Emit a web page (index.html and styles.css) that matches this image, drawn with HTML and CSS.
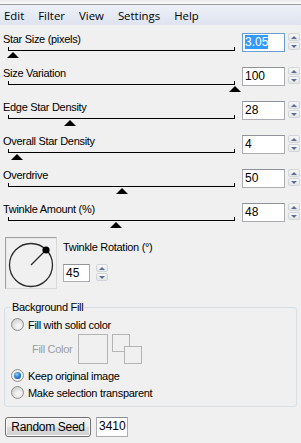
FILE: index.html
```html
<!DOCTYPE html>
<html lang="en">
<head>
    <meta charset="UTF-8">
    <title>Star Field</title>
    <link rel="stylesheet" href="styles.css">
</head>
<body>
    <div class="topstrip"></div>
    <div class="menubar">
        <span>Edit</span>
        <span>Filter</span>
        <span>View</span>
        <span>Settings</span>
        <span>Help</span>
    </div>

    <div class="panel">
        <div class="row">
            <div class="control">
                <div class="label">Star Size (pixels)</div>
                <div class="slider"><div class="track"></div><div class="thumb" style="left:2.4%"></div></div>
            </div>
            <div class="field focused"><span class="sel">3.05</span></div>
            <div class="spin"><div class="up"></div><div class="down"></div></div>
        </div>
        <div class="row">
            <div class="control">
                <div class="label">Size Variation</div>
                <div class="slider"><div class="track"></div><div class="thumb" style="left:100%"></div></div>
            </div>
            <div class="field">100</div>
            <div class="spin"><div class="up"></div><div class="down"></div></div>
        </div>
        <div class="row">
            <div class="control">
                <div class="label">Edge Star Density</div>
                <div class="slider"><div class="track"></div><div class="thumb" style="left:27.3%"></div></div>
            </div>
            <div class="field">28</div>
            <div class="spin"><div class="up"></div><div class="down"></div></div>
        </div>
        <div class="row">
            <div class="control">
                <div class="label">Overall Star Density</div>
                <div class="slider"><div class="track"></div><div class="thumb" style="left:4%"></div></div>
            </div>
            <div class="field">4</div>
            <div class="spin"><div class="up"></div><div class="down"></div></div>
        </div>
        <div class="row">
            <div class="control">
                <div class="label">Overdrive</div>
                <div class="slider"><div class="track"></div><div class="thumb" style="left:50.2%"></div></div>
            </div>
            <div class="field">50</div>
            <div class="spin"><div class="up"></div><div class="down"></div></div>
        </div>
        <div class="row">
            <div class="control">
                <div class="label">Twinkle Amount (%)</div>
                <div class="slider"><div class="track"></div><div class="thumb" style="left:47.6%"></div></div>
            </div>
            <div class="field">48</div>
            <div class="spin"><div class="up"></div><div class="down"></div></div>
        </div>

        <div class="rotation">
            <div class="dial">
                <svg width="50" height="50" viewBox="0 0 50 50">
                    <circle cx="25" cy="27" r="21.5" fill="none" stroke="#2b2b2b" stroke-width="1.3"/>
                    <line x1="25" y1="27" x2="40" y2="12" stroke="#2b2b2b" stroke-width="1.3"/>
                    <circle cx="40" cy="12" r="3.6" fill="#000"/>
                </svg>
            </div>
            <div class="rot-side">
                <div class="label">Twinkle Rotation (°)</div>
                <div class="rot-input">
                    <div class="field small">45</div>
                    <div class="spin"><div class="up"></div><div class="down"></div></div>
                </div>
            </div>
        </div>

        <fieldset class="group">
            <legend>Background Fill</legend>
            <div class="radio-row"><span class="radio"></span>Fill with solid color</div>
            <div class="fill-row">
                <span class="disabled">Fill Color</span>
                <span class="swatch"></span>
                <span class="swap"><span class="sq first"></span><span class="sq second"></span></span>
            </div>
            <div class="radio-row"><span class="radio checked"></span>Keep original image</div>
            <div class="radio-row"><span class="radio"></span>Make selection transparent</div>
        </fieldset>

        <div class="seed-row">
            <button class="btn">Random Seed</button>
            <div class="field seed">3410</div>
        </div>
    </div>
</body>
</html>
```

FILE: styles.css
```css
body {
    margin: 0;
    background: #f0f0f0;
    font-family: "Liberation Sans", Arial, sans-serif;
    font-size: 11px;
    color: #000;
    width: 301px;
    height: 443px;
    overflow: hidden;
}
.topstrip {
    height: 4px;
    background: linear-gradient(#e9e9e9, #fbfbfb);
    border-bottom: 1px solid #9c9c9c;
}
.menubar {
    height: 20px;
    display: flex;
    align-items: center;
    gap: 14px;
    padding-left: 4px;
    background: linear-gradient(#eef1f9, #dde3ef);
    font-family: "Open Sans", sans-serif;
    font-size: 11.4px;
    color: #000;
}
.panel {
    padding: 8px 1px 0 3px;
}
.label {
    line-height: 13px;
    height: 13px;
    letter-spacing: -0.3px;
    white-space: nowrap;
}
.row {
    display: grid;
    grid-template-columns: 1fr 43px 12px;
    column-gap: 3px;
    height: 34px;
}
.slider {
    position: relative;
    width: 227px;
    height: 10px;
    margin: 1px 0 0 5px;
}
.track {
    position: absolute;
    left: 0;
    right: 0;
    top: 0;
    height: 3px;
    border: 1px solid #000;
    border-top: none;
}
.thumb {
    position: absolute;
    top: 5px;
    width: 0;
    height: 0;
    margin-left: -6px;
    border-left: 6px solid transparent;
    border-right: 6px solid transparent;
    border-bottom: 6px solid #000;
}
.field {
    box-sizing: border-box;
    height: 19px;
    background: #fff;
    border: 1px solid #abadb3;
    border-top-color: #8e939b;
    padding: 1px 2px;
    line-height: 15px;
    font-size: 12px;
}
.field.focused {
    border-color: #6a9fd4;
}
.sel {
    background: #3399ff;
    color: #fff;
}
.spin {
    display: flex;
    flex-direction: column;
    gap: 1px;
    height: 17px;
}
.spin div {
    flex: 1;
    box-sizing: border-box;
    border: 1px solid #d2d5da;
    border-radius: 2px;
    background: linear-gradient(#f7f7f7, #e6e6e6);
    display: flex;
    align-items: center;
    justify-content: center;
}
.spin .up::after {
    content: "";
    border-left: 3px solid transparent;
    border-right: 3px solid transparent;
    border-bottom: 3px solid #5a6e95;
}
.spin .down::after {
    content: "";
    border-left: 3px solid transparent;
    border-right: 3px solid transparent;
    border-top: 3px solid #5a6e95;
}
.rotation {
    display: flex;
    height: 52px;
}
.dial {
    box-sizing: border-box;
    width: 52px;
    height: 52px;
    margin-left: 2px;
    border: 1px solid #a0a0a0;
    border-right-color: #d8d8d8;
    border-bottom-color: #d8d8d8;
    box-shadow: inset 1px 1px 0 #e6e6e6;
}
.dial svg {
    display: block;
}
.rot-side {
    margin-left: 6px;
    padding-top: 4px;
}
.rot-input {
    display: flex;
    gap: 6px;
    margin-top: 10px;
}
.field.small {
    width: 27px;
    height: 18px;
}
.rot-input .spin {
    width: 12px;
}
.group {
    margin: 12px 3px 0 1px;
    padding: 2px 6px 5px;
    border: 1px solid #d5dfe5;
    border-radius: 3px;
}
.group legend {
    padding: 0 1px;
    line-height: 13px;
    letter-spacing: -0.3px;
}
.radio-row {
    display: flex;
    align-items: center;
    height: 17px;
    letter-spacing: -0.3px;
}
.radio {
    box-sizing: border-box;
    width: 13px;
    height: 13px;
    margin-right: 4px;
    border: 1px solid #8f8f8f;
    border-radius: 50%;
    background: radial-gradient(circle at 60% 65%, #f4f4f4 20%, #d4d4d4 70%, #c8c8c8);
    display: flex;
    align-items: center;
    justify-content: center;
}
.radio.checked {
    background: radial-gradient(#fbfbfb, #e4e4e4);
}
.radio.checked::after {
    content: "";
    width: 7px;
    height: 7px;
    border-radius: 50%;
    background: radial-gradient(circle at 40% 35%, #8bd0ff, #1c6fb8 60%, #0c4a82);
}
.fill-row {
    display: flex;
    align-items: center;
    height: 30px;
    margin: 1px 0 3px;
}
.disabled {
    color: #9d9d9d;
    margin-left: 21px;
    letter-spacing: -0.3px;
}
.swatch {
    box-sizing: border-box;
    width: 30px;
    height: 30px;
    margin-left: 6px;
    border: 1px solid #b4b4b4;
}
.swap {
    position: relative;
    width: 30px;
    height: 30px;
    margin-left: 4px;
}
.sq {
    position: absolute;
    box-sizing: border-box;
    width: 18px;
    height: 18px;
    border: 1px solid #b4b4b4;
    background: #f0f0f0;
}
.sq.first {
    left: 0;
    top: 0;
}
.sq.second {
    left: 12px;
    top: 12px;
}
.seed-row {
    display: flex;
    align-items: center;
    gap: 5px;
    margin: 10px 0 0 2px;
}
.btn {
    box-sizing: border-box;
    width: 86px;
    height: 20px;
    padding: 0;
    border: 1px solid #707070;
    border-radius: 3px;
    background: linear-gradient(#f2f2f2, #ebebeb 50%, #dddddd 50%, #cfcfcf);
    box-shadow: inset 0 0 0 1px #fcfcfc;
    font-family: "Liberation Sans", Arial, sans-serif;
    font-size: 12px;
    letter-spacing: -0.3px;
    color: #000;
}
.field.seed {
    width: 32px;
    height: 20px;
}
```
